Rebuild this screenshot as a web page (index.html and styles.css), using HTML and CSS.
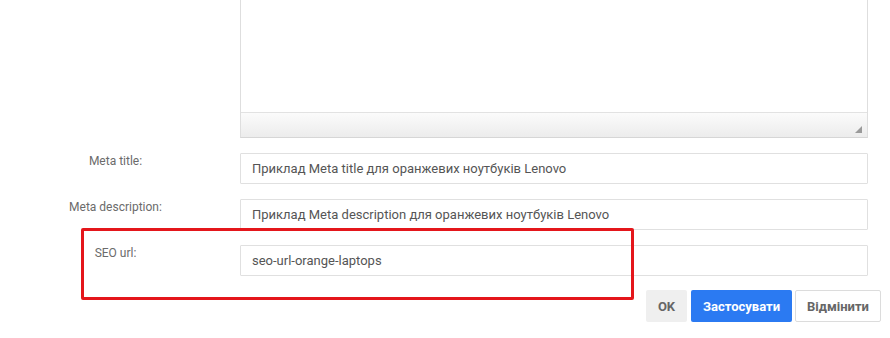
FILE: index.html
```html
<!DOCTYPE html>
<html lang="uk">
<head>
    <meta charset="UTF-8">
    <meta name="viewport" content="width=device-width, initial-scale=1.0">
    <title>SEO налаштування</title>
    <link rel="stylesheet" href="styles.css">
</head>
<body>
    <div class="seo-form">
        <div class="row">
            <div class="row-label"></div>
            <div class="row-field">
                <div class="editor">
                    <div class="editor-body"></div>
                    <div class="editor-status">
                        <span class="grip"></span>
                    </div>
                </div>
            </div>
        </div>
        <div class="row">
            <label class="row-label" for="metaTitle">Meta title:</label>
            <div class="row-field">
                <input class="text-input" type="text" id="metaTitle" value="Приклад Meta title для оранжевих ноутбуків Lenovo">
            </div>
        </div>
        <div class="row">
            <label class="row-label" for="metaDescription">Meta description:</label>
            <div class="row-field">
                <input class="text-input" type="text" id="metaDescription" value="Приклад Meta description для оранжевих ноутбуків Lenovo">
            </div>
        </div>
        <div class="row row-seo">
            <label class="row-label" for="seoUrl">SEO url:</label>
            <div class="row-field">
                <input class="text-input" type="text" id="seoUrl" value="seo-url-orange-laptops">
            </div>
            <div class="highlight"></div>
        </div>
        <div class="actions">
            <button class="btn btn-light" type="button">OK</button>
            <button class="btn btn-primary" type="button">Застосувати</button>
            <button class="btn btn-outline" type="button">Відмінити</button>
        </div>
    </div>
</body>
</html>
```

FILE: styles.css
```css
body {
    font-family: 'Roboto', 'Liberation Sans', sans-serif;
    margin: 0;
    background-color: white;
    overflow: hidden;
}
.seo-form {
    padding-right: 22px;
}
.row {
    display: flex;
    margin-bottom: 15px;
}
.row-seo {
    position: relative;
    margin-bottom: 14px;
}
.row-label {
    width: 231px;
    flex-shrink: 0;
    text-align: center;
    font-size: 12px;
    line-height: 16px;
    color: #6b6b6b;
}
.row-field {
    flex: 1;
    margin-left: 9px;
}
.editor {
    margin-top: -20px;
    border: 1px solid #dedede;
    border-bottom-color: #d6d6d6;
}
.editor-body {
    height: 131px;
    background-color: white;
}
.editor-status {
    position: relative;
    height: 24px;
    border-top: 1px solid #e2e2e2;
    background: linear-gradient(#fbfbfb, #ececec);
}
.grip {
    position: absolute;
    right: 5px;
    bottom: 4px;
    width: 0;
    height: 0;
    border-left: 7px solid transparent;
    border-bottom: 7px solid #9a9a9a;
}
.text-input {
    display: block;
    box-sizing: border-box;
    width: 100%;
    height: 31px;
    margin: 0;
    padding: 0 11px;
    border: 1px solid #e0e0e0;
    border-radius: 1px;
    font-family: inherit;
    font-size: 13px;
    color: #555;
    background-color: white;
    outline: none;
}
.highlight {
    position: absolute;
    left: 81px;
    top: -17px;
    width: 547px;
    height: 66px;
    border: 3px solid #e4161b;
    border-radius: 2px;
    pointer-events: none;
}
.actions {
    display: flex;
    justify-content: flex-end;
    margin-right: -13px;
}
.btn {
    height: 32px;
    margin: 0;
    border: 1px solid transparent;
    border-radius: 2px;
    font-family: inherit;
    font-size: 13px;
    font-weight: 700;
    cursor: pointer;
}
.btn-light {
    width: 41px;
    padding: 0;
    background-color: #efefef;
    color: #666;
    margin-right: 4px;
}
.btn-primary {
    width: 101px;
    padding: 0;
    background-color: #2b7af2;
    color: white;
    margin-right: 3px;
}
.btn-outline {
    width: 86px;
    padding: 0;
    background-color: white;
    border-color: #dcdcdc;
    color: #666;
}
```
